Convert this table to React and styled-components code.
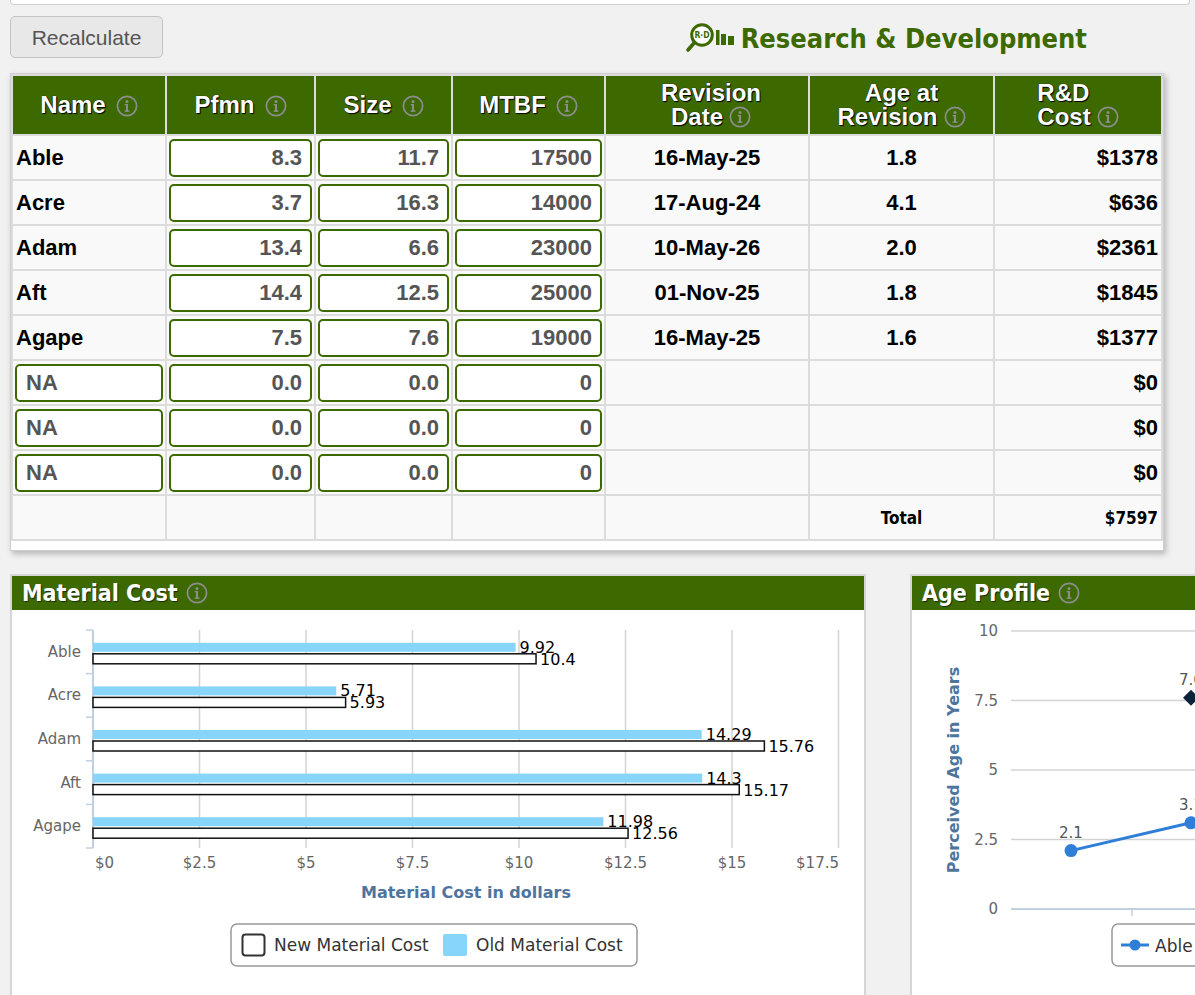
import React from 'react';
import styled, { createGlobalStyle } from 'styled-components';

const GREEN = '#3d6a00';
const COND = '"DejaVu Sans Condensed", "DejaVu Sans", Verdana, sans-serif';
const CHART_FONT = '"DejaVu Sans", Verdana, sans-serif';

const Global = createGlobalStyle`
  html, body { margin: 0; padding: 0; overflow: hidden; background: #f1f1f1; }
  body { font-family: "Liberation Sans", Arial, sans-serif; }
  * { box-sizing: border-box; }
`;

const Page = styled.div`
  width: 1195px;
  height: 995px;
  overflow: hidden;
  padding-left: 10px;
`;

const TopStrip = styled.div`
  width: 1180px;
  height: 5px;
  background: #fff;
  border: 1px solid #cfcfcf;
  border-top: none;
  border-radius: 0 0 4px 4px;
`;

const Toolbar = styled.div`
  display: flex;
  align-items: center;
  justify-content: space-between;
  width: 1077px;
  height: 42px;
  margin-top: 11px;
`;

const Button = styled.button`
  width: 153px;
  height: 42px;
  background: #e8e8e8;
  border: 1px solid #c4c4c4;
  border-radius: 5px;
  font-family: "Liberation Sans", Arial, sans-serif;
  font-size: 21px;
  color: #555;
  padding: 1px 0 0;
`;

const Title = styled.div`
  display: flex;
  align-items: center;
  gap: 5px;
  margin-top: 2px;
  color: ${GREEN};
  font-family: ${COND};
  font-stretch: condensed;
  font-weight: bold;
  font-size: 27px;
`;

const TablePanel = styled.div`
  width: 1154px;
  margin-top: 15px;
  background: #fff;
  border: 1px solid #cfcfcf;
  box-shadow: 2px 3px 6px rgba(0, 0, 0, 0.25);
  padding-bottom: 9px;
`;

const Grid = styled.div`
  display: grid;
  grid-template-columns: 152px 147px 135px 151px 202px 183px 166px;
  grid-template-rows: 58px repeat(9, 43px);
  gap: 2px;
  padding: 2px;
  background: #dcdcdc;
`;

const HeadCell = styled.div`
  background: ${GREEN};
  color: #fff;
  font-weight: bold;
  font-size: 24px;
  line-height: 24px;
  display: flex;
  align-items: center;
  justify-content: center;
  text-align: center;
  padding-left: ${(p) => p.$pl || 0}px;
  text-shadow: 1px 1px 1px #000, 0 0 1px #000;
`;

const Cell = styled.div`
  background: #f9f9f9;
  display: flex;
  align-items: center;
  justify-content: ${(p) => p.$align || 'flex-start'};
  padding: 0 3px;
  font-weight: bold;
  font-size: 22px;
  color: #000;
`;

const InputCell = styled.div`
  background: #f9f9f9;
  padding: 3px 2px 2px 2px;
`;

const Input = styled.input`
  width: 100%;
  height: 100%;
  border: 2px solid ${GREEN};
  border-radius: 5px;
  background: #fff;
  font-family: "Liberation Sans", Arial, sans-serif;
  font-weight: bold;
  font-size: 22px;
  color: #555;
  text-align: ${(p) => p.$align || 'right'};
  padding: ${(p) => (p.$align === 'left' ? '0 8px 0 9px' : '0 8px 0 8px')};
  outline: none;
`;

const TotalText = styled.span`
  font-family: ${COND};
  font-stretch: condensed;
  font-weight: bold;
  font-size: 17px;
`;

const ChartsRow = styled.div`
  display: flex;
  align-items: flex-start;
  gap: 44px;
  margin-top: 23px;
`;

const ChartPanel = styled.div`
  flex-shrink: 0;
  width: ${(p) => p.$w}px;
  height: 440px;
  background: #fff;
  border: 2px solid #d6d6d6;
`;

const PanelHeader = styled.div`
  height: 34px;
  background: ${GREEN};
  color: #fff;
  display: flex;
  align-items: center;
  gap: 8px;
  padding-left: 10px;
  font-family: ${COND};
  font-stretch: condensed;
  font-weight: bold;
  font-size: 23px;
  text-shadow: 1px 1px 1px rgba(0, 0, 0, 0.6);
`;

const IconWrap = styled.span`
  display: inline-block;
  width: ${(p) => p.$size}px;
  height: ${(p) => p.$size}px;
  margin-left: ${(p) => p.$ml || 0}px;
  vertical-align: ${(p) => p.$va || 'middle'};
  line-height: 0;
  svg { display: block; }
`;

const ChartSvg = styled.svg`
  display: block;
  font-family: ${CHART_FONT};
`;

const InfoIcon = ({ size = 22, ml = 0, va }) => (
  <IconWrap $size={size} $ml={ml} $va={va}>
    <svg width={size} height={size} viewBox="0 0 22 22">
      <circle cx="11" cy="11" r="9.6" fill="none" stroke="#8d8d8d" strokeWidth="1.7" />
      <circle cx="11" cy="6.4" r="1.5" fill="#8d8d8d" />
      <rect x="10" y="9" width="2" height="7.6" fill="#8d8d8d" />
      <rect x="8.6" y="9" width="2.4" height="1.4" fill="#8d8d8d" />
      <rect x="8.6" y="15.4" width="4.8" height="1.4" fill="#8d8d8d" />
    </svg>
  </IconWrap>
);

const Logo = () => (
  <svg width="52" height="32" viewBox="0 0 52 32">
    <circle cx="18" cy="13" r="10.3" fill="#fff" stroke={GREEN} strokeWidth="3" />
    <text x="18" y="16" textAnchor="middle" fontSize="8.5" fontWeight="bold" fill={GREEN} fontFamily='"DejaVu Sans Condensed", "DejaVu Sans", sans-serif'>R·D</text>
    <line x1="10.5" y1="20.5" x2="4" y2="28" stroke={GREEN} strokeWidth="3.6" strokeLinecap="round" />
    <rect x="32" y="8" width="3.5" height="15" fill={GREEN} />
    <rect x="37" y="12" width="5" height="11" fill={GREEN} />
    <rect x="44" y="14" width="6" height="9" fill={GREEN} />
  </svg>
);

const rows = [
  { name: 'Able', p: '8.3', s: '11.7', m: '17500', d: '16-May-25', a: '1.8', c: '$1378' },
  { name: 'Acre', p: '3.7', s: '16.3', m: '14000', d: '17-Aug-24', a: '4.1', c: '$636' },
  { name: 'Adam', p: '13.4', s: '6.6', m: '23000', d: '10-May-26', a: '2.0', c: '$2361' },
  { name: 'Aft', p: '14.4', s: '12.5', m: '25000', d: '01-Nov-25', a: '1.8', c: '$1845' },
  { name: 'Agape', p: '7.5', s: '7.6', m: '19000', d: '16-May-25', a: '1.6', c: '$1377' },
  { name: 'NA', edit: true, p: '0.0', s: '0.0', m: '0', d: '', a: '', c: '$0' },
  { name: 'NA', edit: true, p: '0.0', s: '0.0', m: '0', d: '', a: '', c: '$0' },
  { name: 'NA', edit: true, p: '0.0', s: '0.0', m: '0', d: '', a: '', c: '$0' },
];

const ProductTable = () => (
  <TablePanel>
    <Grid>
      <HeadCell><span>Name<InfoIcon ml={10} /></span></HeadCell>
      <HeadCell><span>Pfmn<InfoIcon ml={10} /></span></HeadCell>
      <HeadCell><span>Size<InfoIcon ml={10} /></span></HeadCell>
      <HeadCell><span>MTBF<InfoIcon ml={10} /></span></HeadCell>
      <HeadCell $pl={8}><span>Revision<br />Date<InfoIcon ml={6} va="-3px" /></span></HeadCell>
      <HeadCell><span>Age at<br />Revision<InfoIcon ml={6} va="-3px" /></span></HeadCell>
      <HeadCell><span style={{ textAlign: 'left' }}>R&amp;D<br />Cost<InfoIcon ml={6} va="-3px" /></span></HeadCell>
      {rows.map((r, i) => (
        <React.Fragment key={i}>
          {r.edit ? (
            <InputCell><Input readOnly defaultValue={r.name} $align="left" /></InputCell>
          ) : (
            <Cell>{r.name}</Cell>
          )}
          <InputCell><Input readOnly defaultValue={r.p} /></InputCell>
          <InputCell><Input readOnly defaultValue={r.s} /></InputCell>
          <InputCell><Input readOnly defaultValue={r.m} /></InputCell>
          <Cell $align="center">{r.d}</Cell>
          <Cell $align="center">{r.a}</Cell>
          <Cell $align="flex-end">{r.c}</Cell>
        </React.Fragment>
      ))}
      <Cell />
      <Cell />
      <Cell />
      <Cell />
      <Cell />
      <Cell $align="center"><TotalText>Total</TotalText></Cell>
      <Cell $align="flex-end"><TotalText>$7597</TotalText></Cell>
    </Grid>
  </TablePanel>
);

const cats = [
  { n: 'Able', old: 9.92, nw: 10.4 },
  { n: 'Acre', old: 5.71, nw: 5.93 },
  { n: 'Adam', old: 14.29, nw: 15.76 },
  { n: 'Aft', old: 14.3, nw: 15.17 },
  { n: 'Agape', old: 11.98, nw: 12.56 },
];

const BLUE_BAR = '#87d5fb';

const MaterialChart = () => {
  const x0 = 93;
  const k = 42.6;
  const top = 630;
  const band = 43.6;
  const bottom = top + band * 5;
  const ticks = ['$0', '$2.5', '$5', '$7.5', '$10', '$12.5', '$15', '$17.5'];
  return (
    <ChartSvg width="852" height="400" viewBox="12 610 852 400">
      {ticks.map((t, i) =>
        i > 0 ? (
          <line key={'g' + i} x1={x0 + i * 2.5 * k} x2={x0 + i * 2.5 * k} y1={top} y2={bottom} stroke="#d3d3d3" strokeWidth="1.5" />
        ) : null
      )}
      <line x1={x0} x2={x0} y1={top} y2={bottom} stroke="#c0d0e0" strokeWidth="2" />
      {[0, 1, 2, 3, 4, 5].map((i) => (
        <line key={'t' + i} x1={86} x2={x0} y1={top + i * band} y2={top + i * band} stroke="#c0d0e0" strokeWidth="1.5" />
      ))}
      {cats.map((c, i) => {
        const cy = top + band * (i + 0.5);
        return (
          <g key={c.n}>
            <text x={81} y={cy + 5} textAnchor="end" fontSize="15" fill="#666">{c.n}</text>
            <rect x={x0} y={cy - 9} width={c.old * k} height={9} fill={BLUE_BAR} />
            <rect x={x0} y={cy + 2} width={c.nw * k} height={10} fill="#fff" stroke="#111" strokeWidth="1.5" />
            <text x={x0 + c.old * k + 4} y={cy + 1} fontSize="16" fill="#000">{c.old}</text>
            <text x={x0 + c.nw * k + 4} y={cy + 13} fontSize="16" fill="#000">{c.nw}</text>
          </g>
        );
      })}
      {ticks.map((t, i) => {
        const x = i === 0 ? x0 + 2 : i === 7 ? 839 : x0 + i * 2.5 * k;
        const anchor = i === 0 ? 'start' : i === 7 ? 'end' : 'middle';
        return (
          <text key={'l' + i} x={x} y={868} textAnchor={anchor} fontSize="15" fill="#666">{t}</text>
        );
      })}
      <text x={466} y={898} textAnchor="middle" fontSize="16" fontWeight="bold" fill="#4d759e">Material Cost in dollars</text>
      <rect x={231} y={924} width={406} height={42} rx={6} fill="#fff" stroke="#999" strokeWidth="1.5" />
      <rect x={242.5} y={934.5} width={22} height={21} rx={3} fill="#fff" stroke="#333" strokeWidth="2" />
      <text x={274} y={951} fontSize="17" fill="#333">New Material Cost</text>
      <rect x={443} y={934} width={24} height={22} rx={2} fill={BLUE_BAR} />
      <text x={476} y={951} fontSize="17" fill="#333">Old Material Cost</text>
    </ChartSvg>
  );
};

const AgeChart = () => {
  const y = (v) => 909 - v * 27.8;
  const vals = [0, 2.5, 5, 7.5, 10];
  const p1 = { x: 1071, y: y(2.1) };
  const p2 = { x: 1191, y: y(3.1) };
  const d = { x: 1191, y: y(7.6) };
  return (
    <ChartSvg width="400" height="400" viewBox="912 610 400 400">
      {vals.map((v) => (
        <g key={v}>
          {v > 0 && <line x1={1011} x2={1312} y1={y(v)} y2={y(v)} stroke="#d3d3d3" strokeWidth="1.5" />}
          <text x={998} y={y(v) + 5} textAnchor="end" fontSize="15" fill="#666">{v}</text>
        </g>
      ))}
      <line x1={1011} x2={1312} y1={909} y2={909} stroke="#c0d0e0" strokeWidth="2" />
      <line x1={1132} x2={1132} y1={909} y2={916} stroke="#c0d0e0" strokeWidth="1.5" />
      <line x1={1252} x2={1252} y1={909} y2={916} stroke="#c0d0e0" strokeWidth="1.5" />
      <text x={959} y={770} transform="rotate(-90 959 770)" textAnchor="middle" fontSize="16" fontWeight="bold" fill="#4d759e">Perceived Age in Years</text>
      <line x1={p1.x} y1={p1.y} x2={p2.x} y2={p2.y} stroke="#2f7ed8" strokeWidth="3" />
      <circle cx={p1.x} cy={p1.y} r="6.5" fill="#2f7ed8" />
      <circle cx={p2.x} cy={p2.y} r="6.5" fill="#2f7ed8" />
      <text x={p1.x} y={p1.y - 13} textAnchor="middle" fontSize="15" fill="#555">2.1</text>
      <text x={p2.x} y={p2.y - 13} textAnchor="middle" fontSize="15" fill="#555">3.1</text>
      <path d={`M${d.x} ${d.y - 8} L${d.x + 8} ${d.y} L${d.x} ${d.y + 8} L${d.x - 8} ${d.y} Z`} fill="#0d233a" />
      <text x={d.x} y={d.y - 13} textAnchor="middle" fontSize="15" fill="#555">7.6</text>
      <rect x={1112} y={924} width={200} height={42} rx={6} fill="#fff" stroke="#999" strokeWidth="1.5" />
      <line x1={1121} x2={1149} y1={945} y2={945} stroke="#2f7ed8" strokeWidth="3" />
      <circle cx={1135} cy={945} r="5.5" fill="#2f7ed8" />
      <text x={1155} y={952} fontSize="17" fill="#333">Able</text>
    </ChartSvg>
  );
};

export default function App() {
  return (
    <>
      <Global />
      <Page>
        <TopStrip />
        <Toolbar>
          <Button>Recalculate</Button>
          <Title>
            <Logo />
            <span>Research &amp; Development</span>
          </Title>
        </Toolbar>
        <ProductTable />
        <ChartsRow>
          <ChartPanel $w={856}>
            <PanelHeader>
              <span>Material Cost</span>
              <InfoIcon size={22} />
            </PanelHeader>
            <MaterialChart />
          </ChartPanel>
          <ChartPanel $w={404}>
            <PanelHeader>
              <span>Age Profile</span>
              <InfoIcon size={22} />
            </PanelHeader>
            <AgeChart />
          </ChartPanel>
        </ChartsRow>
      </Page>
    </>
  );
}
